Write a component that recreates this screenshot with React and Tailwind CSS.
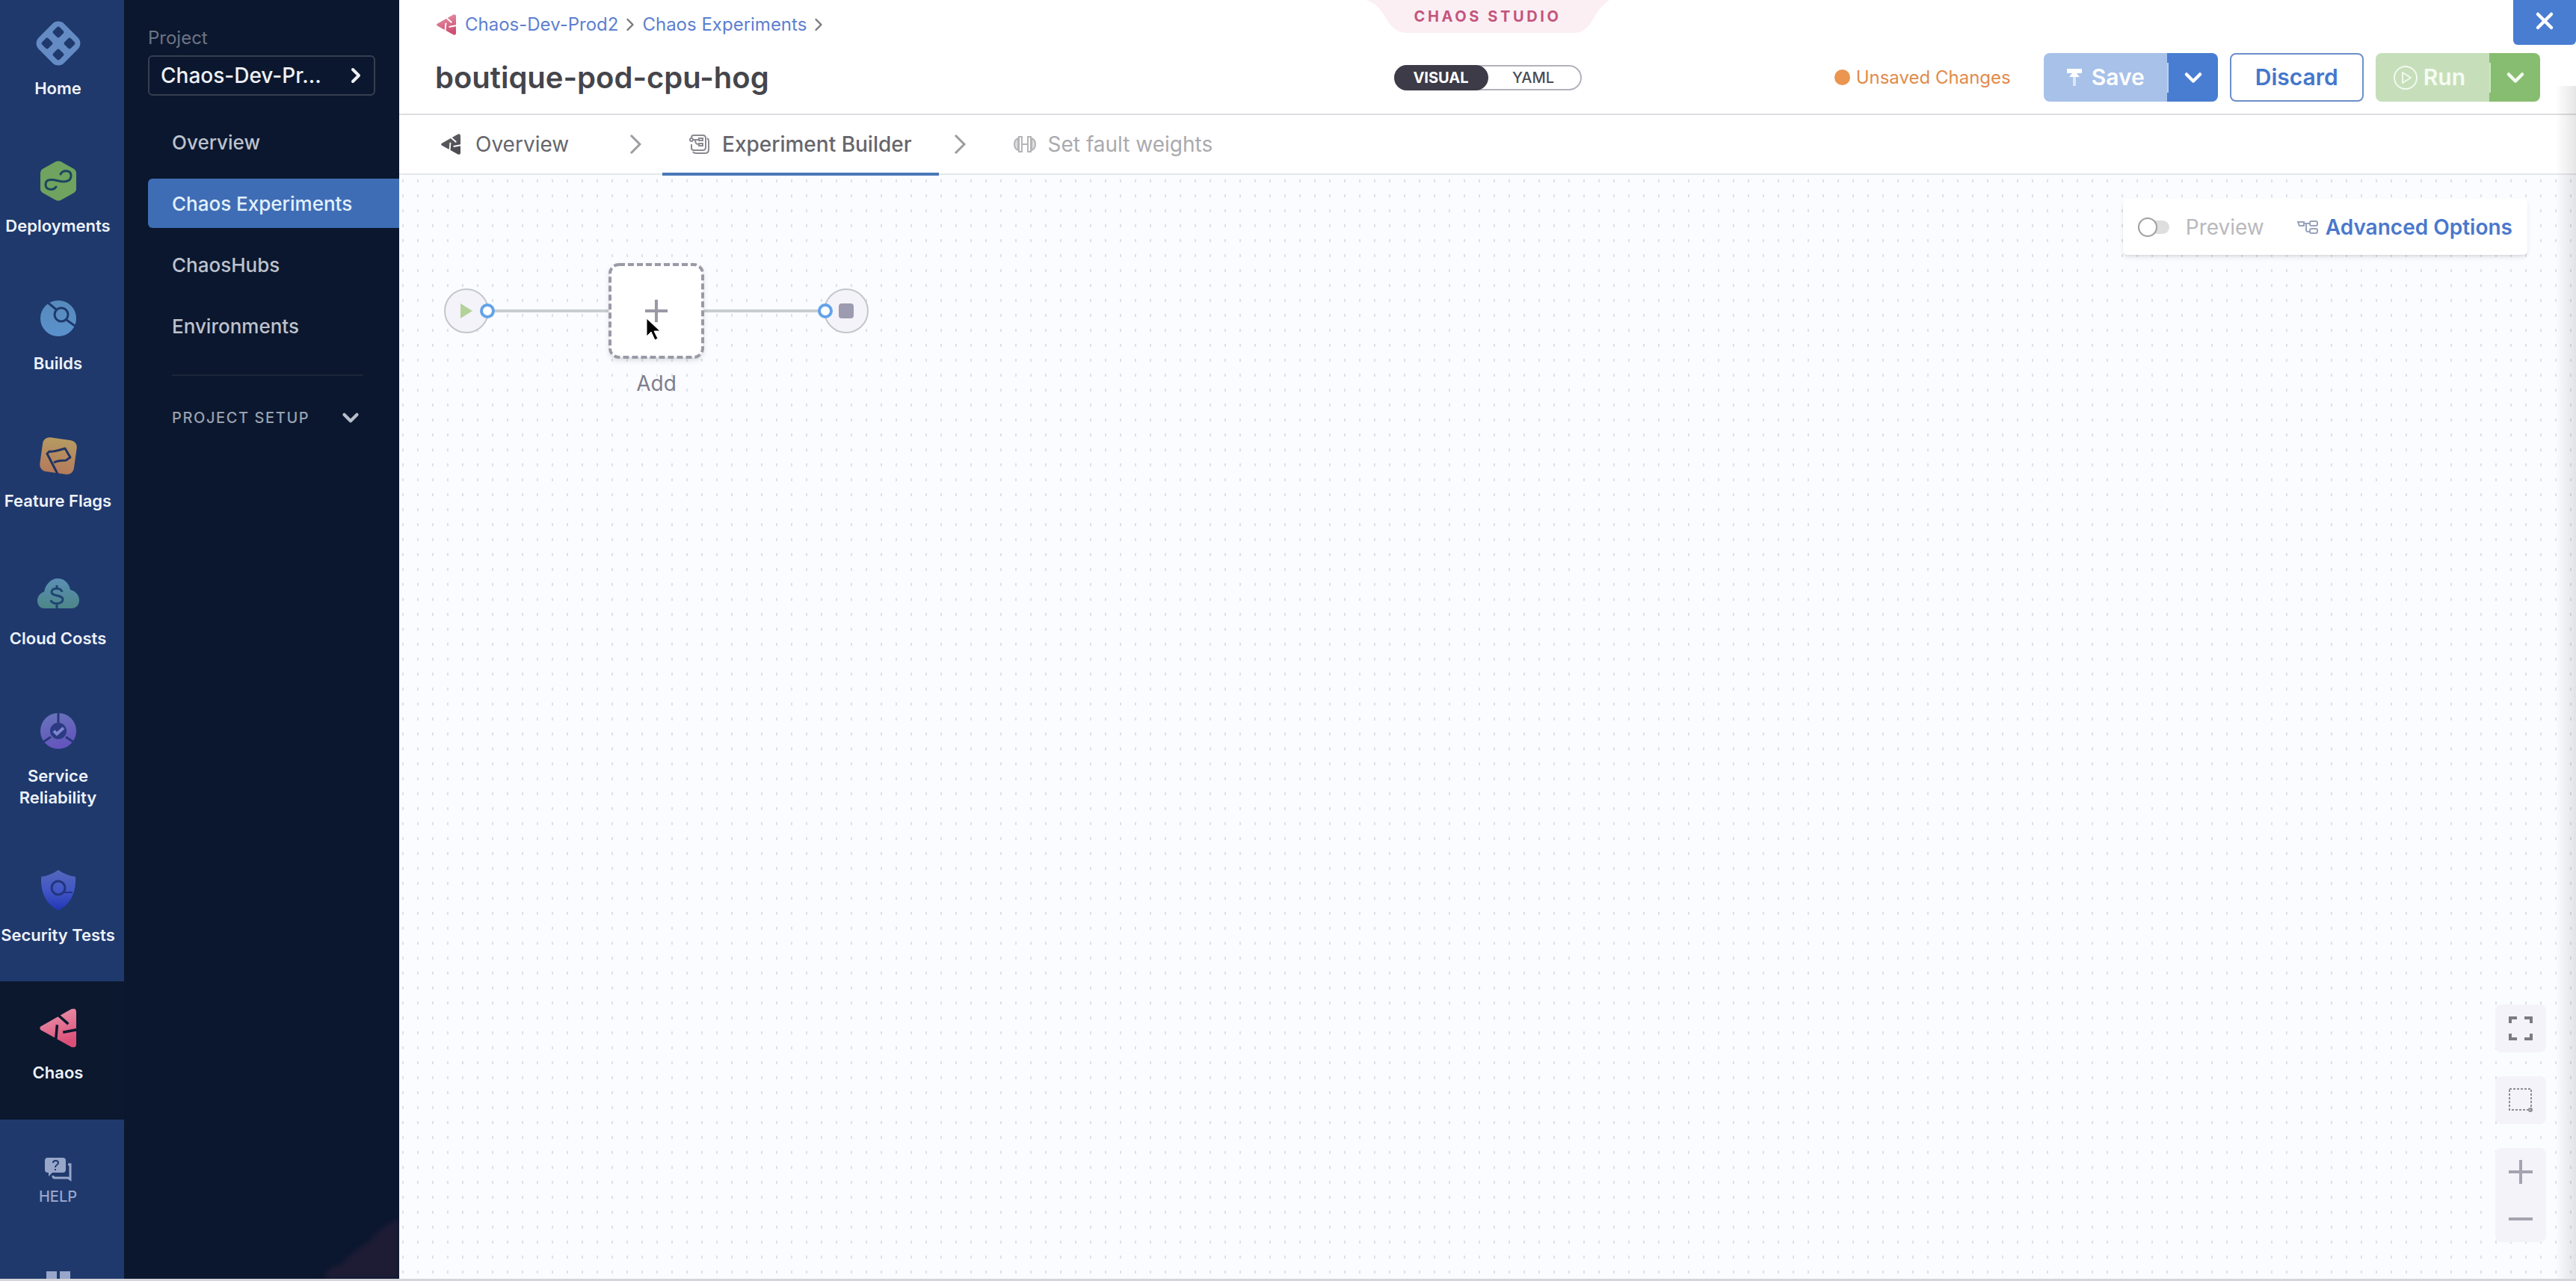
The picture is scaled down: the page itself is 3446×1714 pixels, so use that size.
import { useId, useState } from "react";
import { ChevronDown, ChevronRight, X } from "lucide-react";

const NAV = "#1f396d";

function ChaosIcon({ className, from, to }) {
  const id = useId();
  return (
    <svg className={className} viewBox="0 0 138 148" aria-hidden="true">
      <defs>
        <linearGradient id={id + "g"} x1="0" y1="0" x2="0.3" y2="1">
          <stop offset="0.3" stopColor={from} />
          <stop offset="1" stopColor={to} />
        </linearGradient>
        <mask id={id + "m"} maskUnits="userSpaceOnUse" x="0" y="0" width="138" height="148">
          <rect width="138" height="148" fill="white" />
          <path d="M66 22 L108 59 M66 62 L60 130 M88 90 L142 80" stroke="black" strokeWidth="10" fill="none" />
        </mask>
      </defs>
      <path
        d="M5 68 L120 2 Q138 -4 138 14 V134 Q138 152 120 146 L5 82 Q-3 75 5 68 Z"
        fill={`url(#${id}g)`}
        mask={`url(#${id}m)`}
      />
    </svg>
  );
}

function HomeIcon() {
  return (
    <svg width="60" height="60" viewBox="0 0 60 60" aria-hidden="true">
      <rect x="6" y="6" width="48" height="48" rx="11" fill="#648bc4" transform="rotate(45 30 30)" />
      {[[30, 15], [30, 45], [15, 30], [45, 30]].map(([x, y]) => (
        <rect key={x + "-" + y} x={x - 6} y={y - 6} width="12" height="12" rx="3" fill={NAV} transform={`rotate(45 ${x} ${y})`} />
      ))}
    </svg>
  );
}

function DeployIcon() {
  return (
    <svg width="50" height="54" viewBox="0 0 50 54" aria-hidden="true">
      <path d="M22 1 Q25 0 28 1 L46 11 Q49 13 49 16 V38 Q49 41 46 43 L28 53 Q25 54 22 53 L4 43 Q1 41 1 38 V16 Q1 13 4 11 Z" fill="#6fa35f" />
      <path d="M22 35 C19 40 8 40 8 32 C8 24 16 25 25 27 C34 29 42 28 42 20 C42 12 31 12 28 18" stroke="#1c4560" strokeWidth="3" fill="none" strokeLinecap="round" />
    </svg>
  );
}

function BuildsIcon() {
  return (
    <svg width="50" height="50" viewBox="0 0 50 50" aria-hidden="true">
      <defs>
        <linearGradient id="builds" x1="0" y1="0" x2="0" y2="1">
          <stop offset="0" stopColor="#578abb" />
          <stop offset="1" stopColor="#5a92cc" />
        </linearGradient>
      </defs>
      <circle cx="25" cy="25" r="24" fill="url(#builds)" />
      <circle cx="29" cy="20" r="9" stroke={NAV} strokeWidth="3" fill="none" />
      <path d="M10 3 L22 13 M36 27 L50 37" stroke={NAV} strokeWidth="3" fill="none" />
    </svg>
  );
}

function FlagsIcon() {
  return (
    <svg width="54" height="54" viewBox="0 0 54 54" aria-hidden="true">
      <defs>
        <linearGradient id="flags" x1="0" y1="0" x2="0" y2="1">
          <stop offset="0" stopColor="#b69a62" />
          <stop offset="1" stopColor="#b47b5c" />
        </linearGradient>
      </defs>
      <rect x="4" y="4" width="46" height="46" rx="9" fill="url(#flags)" transform="rotate(8 27 27)" />
      <path d="M26 51 L12 24 L15 21 C22 22 28 19 36 17 L43 29 L37 33 C31 33 26 33 21 36" stroke="#223463" strokeWidth="3" fill="none" strokeLinejoin="round" />
    </svg>
  );
}

function CloudIcon() {
  return (
    <svg width="56" height="40" viewBox="0 0 56 40" aria-hidden="true">
      <defs>
        <linearGradient id="cloud" x1="0" y1="0" x2="0" y2="1">
          <stop offset="0" stopColor="#5b8fb5" />
          <stop offset="1" stopColor="#4d8688" />
        </linearGradient>
      </defs>
      <path d="M10 40 C3 40 0 35 0 30 C0 24 4 19 9 18 C11 7 19 0 27 0 C36 0 42 6 44 15 C51 17 56 22 56 29 C56 36 51 40 46 40 Z" fill="url(#cloud)" />
      <path d="M33 18 C32 12 19 12 19 18 C19 25 34 21 34 28 C34 35 19 35 18 29 M26 9 V14 M26 33 V40" stroke="#1f4471" strokeWidth="3" fill="none" />
    </svg>
  );
}

function ReliabilityIcon() {
  return (
    <svg width="50" height="50" viewBox="0 0 50 50" aria-hidden="true">
      <defs>
        <linearGradient id="srm" x1="0" y1="0" x2="0.3" y2="1">
          <stop offset="0" stopColor="#6876ba" />
          <stop offset="1" stopColor="#6455bd" />
        </linearGradient>
      </defs>
      <circle cx="25" cy="25" r="24" fill="url(#srm)" />
      <circle cx="25" cy="25" r="11" fill="#2b3a82" />
      <path d="M25 0 V14 M15 33 L3 41 M35 33 L47 41" stroke="#263877" strokeWidth="3" />
      <path d="M19 25 L23 29 L32 21" stroke="#7d86cf" strokeWidth="4" fill="none" />
    </svg>
  );
}

function ShieldIcon() {
  return (
    <svg width="46" height="54" viewBox="0 0 46 54" aria-hidden="true">
      <defs>
        <linearGradient id="shield" x1="0" y1="0" x2="0" y2="1">
          <stop offset="0" stopColor="#5468bb" />
          <stop offset="0.5" stopColor="#4257c4" />
          <stop offset="1" stopColor="#2236b8" />
        </linearGradient>
      </defs>
      <path d="M23 0 C30 5 38 8 46 9 C47 30 40 46 23 54 C6 46 -1 30 0 9 C8 8 16 5 23 0 Z" fill="url(#shield)" />
      <circle cx="23" cy="24" r="9" stroke="#22357f" strokeWidth="3" fill="none" />
      <path d="M31 30 H42" stroke="#22357f" strokeWidth="2" />
    </svg>
  );
}

function HelpIcon() {
  return (
    <svg width="36" height="32" viewBox="0 0 36 32" aria-hidden="true">
      <path d="M4 0 H24 Q28 0 28 4 V16 Q28 20 24 20 H10 L5 25 V20 H4 Q0 20 0 16 V4 Q0 0 4 0 Z" fill="#98a6c9" />
      <path d="M11 7 C11 3 18 3 18 7 C18 10 14 9 14 13 M14 15 V17" stroke={NAV} strokeWidth="2" fill="none" />
      <path d="M31 9 H34 V29 L31 27 H13 Q11 27 11 24" stroke="#98a6c9" strokeWidth="3" fill="none" />
    </svg>
  );
}

function BuilderIcon() {
  return (
    <svg width="28" height="28" viewBox="0 0 28 28" fill="none" stroke="#8a8a90" strokeWidth="2" aria-hidden="true">
      <path d="M3 5 Q3 2 6 2 H18 Q22 2 22 6 V18 Q22 22 18 22 H6 Q3 22 3 19 V14" />
      <path d="M24 6 Q26 7 26 10 V21 Q26 26 21 26 H9 Q6 26 5 24" />
      <circle cx="3" cy="8" r="2" />
      <path d="M5 8 H12 M8 8 Q8 14 12 14" />
      <rect x="13" y="6" width="5" height="3" />
      <rect x="13" y="13" width="5" height="3" />
    </svg>
  );
}

function WeightsIcon() {
  return (
    <svg width="30" height="22" viewBox="0 0 30 22" fill="none" stroke="#b5b5b8" strokeWidth="2" aria-hidden="true">
      <path d="M6 3 Q1 5 1 11 Q1 17 6 19 Z M24 3 Q29 5 29 11 Q29 17 24 19 Z" fill="#dedee0" />
      <path d="M7 1 H11 V21 H7 Z M19 1 H23 V21 H19 Z M11 11 H19" />
    </svg>
  );
}

function SaveIcon() {
  return (
    <svg width="22" height="24" viewBox="0 0 22 24" aria-hidden="true">
      <path d="M1 0 H21 V6 H14 L18 11 H4 L8 6 H1 Z" fill="#fff" />
      <path d="M11 10 V23" stroke="#fff" strokeOpacity="0.6" strokeWidth="4" />
    </svg>
  );
}

function RunIcon() {
  return (
    <svg width="32" height="34" viewBox="0 0 32 34" fill="none" stroke="#f2faee" strokeWidth="2" aria-hidden="true">
      <circle cx="16" cy="17" r="15" />
      <path d="M12 10 L23 17 L12 24 Z" strokeLinejoin="round" />
    </svg>
  );
}

function AdvancedIcon() {
  return (
    <svg width="28" height="18" viewBox="0 0 28 18" fill="none" stroke="#9aa3bd" strokeWidth="2" aria-hidden="true">
      <path d="M1 2 H9 V7 H3 Z" />
      <path d="M9 4 H17 M12 4 V13 Q12 15 15 15 H17" />
      <rect x="17" y="1" width="10" height="6" rx="2" />
      <rect x="17" y="11" width="10" height="6" rx="2" />
    </svg>
  );
}

const MODULES = [
  ["Home", HomeIcon],
  ["Deployments", DeployIcon],
  ["Builds", BuildsIcon],
  ["Feature Flags", FlagsIcon],
  ["Cloud Costs", CloudIcon],
  ["Service Reliability", ReliabilityIcon],
  ["Security Tests", ShieldIcon],
];

function ModuleNav() {
  return (
    <nav aria-label="Modules" className="flex w-[166px] shrink-0 flex-col overflow-hidden bg-[#1f396d] text-[22px] leading-[29px] font-semibold text-[#eef2fa]">
      {MODULES.map(([label, Icon]) => (
        <a key={label} href="#" className="flex shrink-0 flex-col items-center gap-4 pt-8 pr-[11px] pb-[47px] text-center first:pt-7">
          <span className="flex h-[60px] items-center"><Icon /></span>
          <span className={label === "Service Reliability" ? "w-28" : "whitespace-nowrap"}>{label}</span>
        </a>
      ))}
      <a href="#" aria-current="page" className="flex shrink-0 flex-col items-center gap-4 bg-[#0b182e] pt-8 pr-[11px] pb-12">
        <span className="flex h-[60px] items-center">
          <ChaosIcon className="h-[53px] w-[49px]" from="#e584a0" to="#dc4f78" />
        </span>
        Chaos
      </a>
      <a href="#" className="flex shrink-0 flex-col items-center gap-2 pt-[51px] pr-[11px] text-xl leading-6 font-medium text-[#98a6c9]">
        <HelpIcon />
        HELP
      </a>
      <button aria-label="Modules menu" className="mt-[88px] mr-[11px] grid shrink-0 grid-cols-2 gap-1 self-center">
        <span className="size-[14px] bg-[#98a6c9]" />
        <span className="size-[14px] bg-[#98a6c9]" />
        <span className="size-[14px] bg-[#98a6c9]" />
        <span className="size-[14px] bg-[#98a6c9]" />
      </button>
    </nav>
  );
}

function ProjectNav() {
  return (
    <aside className="relative w-[368px] shrink-0 overflow-hidden bg-[#0b172e] pt-9 pl-8">
      <svg className="absolute right-0 bottom-0 blur-[3px]" width="100" height="84" viewBox="0 0 100 84" aria-hidden="true">
        <path d="M0 84 Q4 66 22 66 Q34 50 60 34 Q74 14 100 4 V84 Z" fill="#1e1c35" />
      </svg>
      <div className="text-2xl leading-[30px] text-[#6c7484]">Project</div>
      <button className="mt-2 flex h-[54px] w-[304px] items-center justify-between rounded-md border-2 border-[#363f50] pr-2 pl-[15px] text-[28px] font-medium text-[#eef1f6]">
        Chaos-Dev-Pr...
        <ChevronRight size={32} strokeWidth={3} />
      </button>
      <nav aria-label="Project" className="mt-[29px] flex flex-col gap-4 text-[26px] font-medium text-[#bcc2cd]">
        <a href="#" className="flex h-[66px] items-center pl-8">Overview</a>
        <a href="#" aria-current="page" className="flex h-[66px] items-center rounded-l-md bg-[#3f6db5] pl-8 text-[#e2f1ff]">Chaos Experiments</a>
        <a href="#" className="flex h-[66px] items-center pl-8">ChaosHubs</a>
        <a href="#" className="flex h-[66px] items-center pl-8">Environments</a>
      </nav>
      <hr className="mt-8 mr-12 ml-8 border-t-2 border-[#1a2539]" />
      <button className="mt-9 ml-8 flex h-10 w-[256px] items-center justify-between text-xl font-medium tracking-[0.08em] text-[#9aa1af]">
        PROJECT SETUP
        <ChevronDown size={34} strokeWidth={3} className="text-[#b9bfca]" />
      </button>
    </aside>
  );
}

function Header() {
  const [view, setView] = useState("VISUAL");
  return (
    <header className="grid grid-cols-[1fr_auto_1fr] border-b-2 border-[#dedee2] pb-4">
      <div className="pt-4 pl-12">
        <nav aria-label="Breadcrumb" className="flex h-[34px] items-center text-2xl text-[#5d7fd0]">
          <ChaosIcon className="mr-3 ml-[2px] h-[28px] w-[26px]" from="#df8299" to="#cf4f72" />
          <a href="#">Chaos-Dev-Prod2</a>
          <ChevronRight size={28} strokeWidth={2} className="mx-[2px] text-[#77777d]" />
          <a href="#">Chaos Experiments</a>
          <ChevronRight size={28} strokeWidth={2} className="mx-[2px] text-[#77777d]" />
        </nav>
        <h1 className="mt-[30px] text-[40px] leading-[48px] font-semibold text-[#45454b]">boutique-pod-cpu-hog</h1>
      </div>
      <div className="flex flex-col items-center">
        <div className="relative flex h-11 w-[326px] justify-center pt-2">
          <svg className="absolute inset-0" width="326" height="44" viewBox="0 0 326 44" aria-hidden="true">
            <path d="M0 0 H326 Q312 10 304 26 Q294 44 278 44 H56 Q38 44 28 26 Q16 4 0 0 Z" fill="#fbeff4" />
          </svg>
          <span className="relative text-xl font-bold tracking-[0.18em] text-[#c4557c]">CHAOS STUDIO</span>
        </div>
        <div role="group" aria-label="View" className="mt-[43px] flex h-[34px] w-[251px] rounded-full border-2 border-[#b2b2bd] text-xl">
          {["VISUAL", "YAML"].map((name) => (
            <button
              key={name}
              aria-pressed={view === name}
              onClick={() => setView(name)}
              className={
                view === name
                  ? "-m-[2px] flex w-[126px] items-center justify-center rounded-full bg-[#3c3b47] font-bold text-white"
                  : "flex flex-1 items-center justify-center font-medium text-[#4c4b57]"
              }
            >
              {name}
            </button>
          ))}
        </div>
      </div>
      <div className="flex flex-col items-end">
        <button aria-label="Close" className="flex h-[60px] w-[84px] items-center justify-center rounded-b-md bg-[#487dd1] pb-1 text-white">
          <X size={36} strokeWidth={3} />
        </button>
        <div className="mt-[11px] mr-12 flex h-[65px] items-center gap-4">
          <span className="mr-7 flex items-center gap-2 text-2xl text-[#e18b4c]">
            <span className="size-[21px] rounded-full bg-[#ea9550]" />
            Unsaved Changes
          </span>
          <div className="flex h-full text-[30px] font-semibold text-white">
            <button className="flex items-center gap-3 rounded-l-lg bg-[#a7c1e9] px-[30px]">
              <SaveIcon />
              Save
            </button>
            <button aria-label="Save options" className="flex w-[68px] items-center justify-center rounded-r-lg bg-[#487dd1]">
              <span className="mr-auto h-10 w-[2px] bg-[#b9d0f2]" />
              <ChevronDown size={36} strokeWidth={3} className="mr-auto" />
            </button>
          </div>
          <button className="h-full rounded-lg border-2 border-[#6c8fcb] px-8 text-[30px] font-semibold text-[#4477cb]">Discard</button>
          <div className="flex h-full text-[30px] font-semibold text-[#f6fcf3]">
            <button className="flex items-center gap-2 rounded-l-lg bg-[#c6dfba] pr-8 pl-6">
              <RunIcon />
              Run
            </button>
            <button aria-label="Run options" className="flex w-[68px] items-center justify-center rounded-r-lg bg-[#87bd70]">
              <span className="mr-auto h-10 w-[2px] bg-[#cbe8bd]" />
              <ChevronDown size={36} strokeWidth={3} className="mr-auto" />
            </button>
          </div>
        </div>
      </div>
    </header>
  );
}

function StepArrow() {
  return (
    <svg className="mr-7 ml-5 h-7 w-4" viewBox="0 0 16 28" fill="none" stroke="#9b9ba0" strokeWidth="3" aria-hidden="true">
      <path d="M2 2 L14 14 L2 26" />
    </svg>
  );
}

function Steps() {
  return (
    <nav aria-label="Steps" className="flex h-20 items-center border-b-2 border-[#e6e7eb] pl-5 text-[28px] text-[#66666c]">
      <a href="#" className="flex min-w-[268px] items-center gap-5 px-9">
        <ChaosIcon className="h-[28px] w-[26px]" from="#5a5a60" to="#4c4c52" />
        Overview
      </a>
      <StepArrow />
      <a href="#" aria-current="step" className="relative z-10 -mb-1 flex h-20 items-center gap-4 border-b-4 border-[#4a78b8] px-9 font-medium">
        <BuilderIcon />
        Experiment Builder
      </a>
      <StepArrow />
      <a href="#" className="flex items-center gap-4 px-9 text-[#aaaaad]">
        <WeightsIcon />
        Set fault weights
      </a>
    </nav>
  );
}

function Port({ side }) {
  return (
    <span
      className={
        side === "right"
          ? "absolute top-[18px] -right-2.5 size-5 rounded-full border-4 border-[#64a3e8] bg-white"
          : "absolute top-[18px] -left-2.5 size-5 rounded-full border-4 border-[#64a3e8] bg-white"
      }
    />
  );
}

function Pipeline() {
  return (
    <div className="grid grid-cols-[auto_160px_auto_160px_auto] items-center justify-start pt-[118px] pl-[60px]">
      <div className="relative z-10 flex size-[60px] items-center justify-center rounded-full border-2 border-[#c5c5cc] bg-[#f3f3f9]">
        <svg width="16" height="20" viewBox="0 0 16 20" aria-label="Start"><path d="M0 0 L16 10 L0 20 Z" fill="#b5d19a" /></svg>
        <Port side="right" />
      </div>
      <span className="h-1 bg-[#c9cdd1]" />
      <button aria-label="Add fault" className="relative size-32 text-[#9a99a6]">
        <svg className="drop-shadow-md" width="128" height="128" viewBox="0 0 128 128" fill="none" stroke="currentColor" aria-hidden="true">
          <rect x="2" y="2" width="124" height="124" rx="12" fill="#fff" strokeWidth="4" strokeDasharray="8 4" />
          <path d="M49 64 H79 M64 49 V79" strokeWidth="4" />
        </svg>
        <svg className="absolute top-[72px] left-[49px]" width="22" height="34" viewBox="0 0 22 34" aria-hidden="true">
          <path d="M2 2 V26 L8 20 L13 31 L17 29 L12 19 H20 Z" fill="#000" stroke="#fff" strokeWidth="1" strokeLinejoin="round" />
        </svg>
      </button>
      <span className="h-1 bg-[#c9cdd1]" />
      <div className="relative z-10 flex size-[60px] items-center justify-center rounded-full border-2 border-[#c5c5cc] bg-[#f3f3f9]">
        <span className="size-5 rounded-sm bg-[#9c9bb0]" />
        <Port side="left" />
      </div>
      <span className="col-start-3 pt-3 text-center text-[28px] text-[#7e7e8b]">Add</span>
    </div>
  );
}

function Canvas() {
  return (
    <main className="relative flex-1 bg-[#fafcff] bg-[radial-gradient(ellipse_1px_2px_at_5px_8px,#dde0e7_100%,transparent_100%)] bg-[length:20px_20px]">
      <Pipeline />
      <div className="absolute top-8 right-[65px] flex h-[75px] items-center rounded-md bg-white px-5 text-[28px] shadow-md">
        <label className="flex items-center gap-[22px] text-[#b9b9be]">
          <input
            type="checkbox"
            role="switch"
            className="relative h-[18px] w-[42px] appearance-none rounded-full bg-[#dedede] before:absolute before:-top-1 before:left-0 before:size-[26px] before:rounded-full before:border-2 before:border-[#a0a0a2] before:bg-white"
          />
          Preview
        </label>
        <button className="ml-11 flex items-center gap-[10px] font-semibold text-[#4a78cc]">
          <AdvancedIcon />
          Advanced Options
        </button>
      </div>
      <div className="absolute right-10 bottom-[49px] flex flex-col gap-8">
        <button aria-label="Fit to screen" className="flex h-16 w-[68px] items-center justify-center rounded-lg bg-[#f4f3f9]">
          <svg width="32" height="32" viewBox="0 0 32 32" fill="none" stroke="#7b7b84" strokeWidth="4" aria-hidden="true">
            <path d="M2 9 V2 H11 M21 2 H30 V9 M30 23 V30 H21 M11 30 H2 V23" />
          </svg>
        </button>
        <button aria-label="Select area" className="flex h-16 w-[68px] items-center justify-center rounded-lg bg-[#f4f3f9]">
          <svg width="32" height="32" viewBox="0 0 32 32" fill="none" stroke="#8d8d97" strokeWidth="2" aria-hidden="true">
            <path d="M1 1 H30 V29 H1 Z" strokeDasharray="3 2" />
            <circle cx="29" cy="29" r="2" />
          </svg>
        </button>
        <div className="flex flex-col rounded-lg bg-[#f4f3f9]">
          <button aria-label="Zoom in" className="flex h-16 w-[68px] items-center justify-center">
            <svg width="32" height="32" viewBox="0 0 32 32" stroke="#a5a3b0" strokeWidth="4" aria-hidden="true"><path d="M0 16 H32 M16 0 V32" /></svg>
          </button>
          <button aria-label="Zoom out" className="flex h-[62px] w-[68px] items-center justify-center">
            <svg width="32" height="32" viewBox="0 0 32 32" stroke="#a5a3b0" strokeWidth="4" aria-hidden="true"><path d="M0 16 H32" /></svg>
          </button>
        </div>
      </div>
    </main>
  );
}

export default function App() {
  return (
    <div className="flex h-screen overflow-hidden border-b-[3px] border-[#d4d5da] bg-white font-['Inter',sans-serif]">
      <ModuleNav />
      <ProjectNav />
      <div className="relative flex min-w-0 flex-1 flex-col">
        <Header />
        <Steps />
        <Canvas />
        <div className="pointer-events-none absolute top-[115px] right-0 bottom-0 w-7 bg-linear-to-r from-transparent to-black/10" />
      </div>
    </div>
  );
}
